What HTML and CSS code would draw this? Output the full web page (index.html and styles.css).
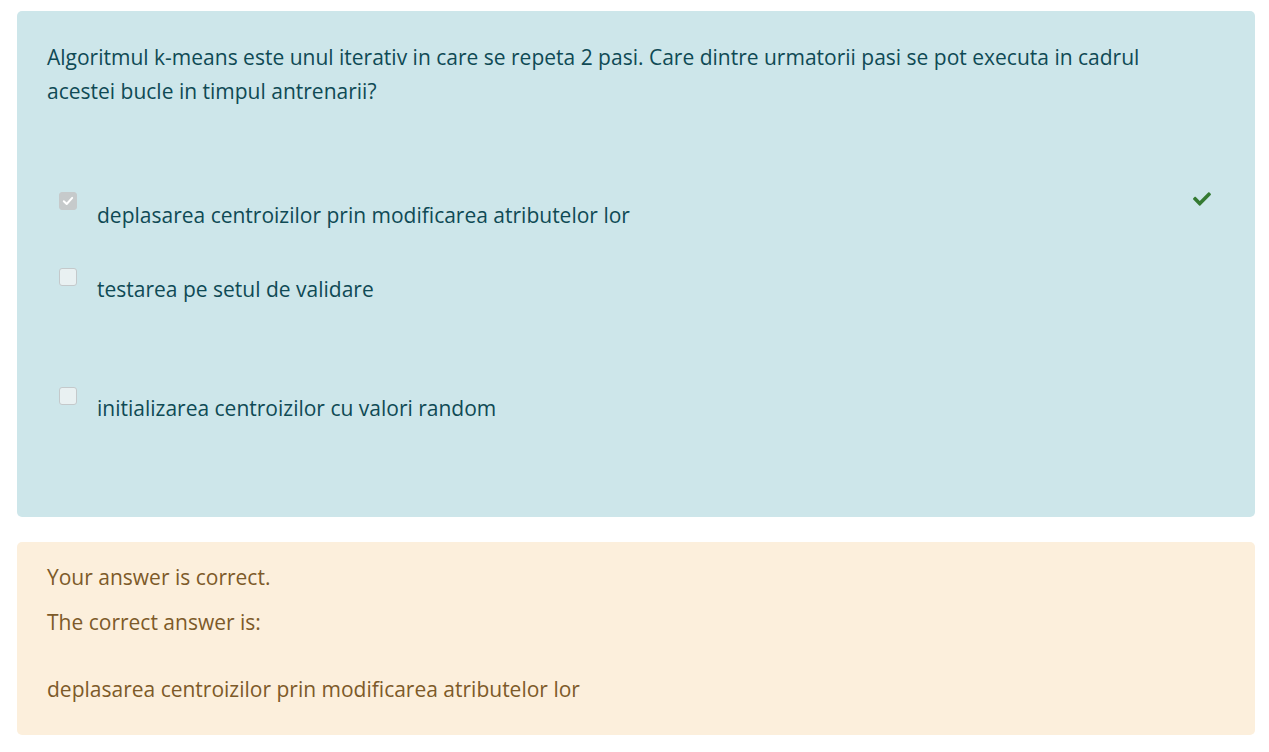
FILE: index.html
```html
<!DOCTYPE html>
<html lang="ro">
<head>
<meta charset="utf-8">
<title>Quiz</title>
<link rel="stylesheet" href="styles.css">
</head>
<body>
<div class="page">
  <div class="formulation">
    <p class="qtext">Algoritmul k-means este unul iterativ in care se repeta 2 pasi. Care dintre urmatorii pasi se pot executa in cadrul acestei bucle in timpul antrenarii?</p>
    <div class="answers">
      <div class="option opt1">
        <span class="box checked"><svg viewBox="0 0 18 18" width="18" height="18"><path d="M4.8 9.2 L7.7 12 L13.2 5.9" fill="none" stroke="#fff" stroke-width="2" stroke-linecap="round" stroke-linejoin="round"/></svg></span>
        <span class="label">deplasarea centroizilor prin modificarea atributelor lor</span>
        <span class="tick"><svg viewBox="0 0 512 512" width="22" height="18"><path fill="#357a32" d="M173.9 439.4l-166.4-166.4c-10-10-10-26.2 0-36.2l36.2-36.2c10-10 26.2-10 36.2 0L192 312.7 432.1 72.6c10-10 26.2-10 36.2 0l36.2 36.2c10 10 10 26.2 0 36.2l-294.4 294.4c-10 10-26.2 10-36.2 0z"/></svg></span>
      </div>
      <div class="option opt2">
        <span class="box"></span>
        <span class="label">testarea pe setul de validare</span>
      </div>
      <div class="option opt3">
        <span class="box"></span>
        <span class="label">initializarea centroizilor cu valori random</span>
      </div>
    </div>
  </div>
  <div class="outcome">
    <p class="fb fb1">Your answer is correct.</p>
    <p class="fb fb2">The correct answer is:</p>
    <p class="fb fb3">deplasarea centroizilor prin modificarea atributelor lor</p>
  </div>
</div>
</body>
</html>
```
FILE: styles.css
```css
html, body {
  margin: 0;
  padding: 0;
  background: #ffffff;
}
body {
  font-family: "Segoe UI", "Open Sans", "Noto Sans", sans-serif;
  font-size: 21px;
}
.page {
  padding: 11px 14px 0 17px;
  display: flex;
  flex-direction: column;
  gap: 25px;
}
.formulation {
  background: #cde6ea;
  color: #0f4a55;
  border-radius: 5px;
  padding: 40px 30px 75px 30px;
  height: 506px;
  box-sizing: border-box;
}
.qtext {
  margin: 0;
  line-height: 34px;
  margin-top: -11px;
  padding-right: 40px;
}
.answers {
  display: flex;
  flex-direction: column;
}
.option {
  display: flex;
  align-items: flex-start;
  padding-left: 12px;
}
.opt1 { margin-top: 84px; }
.opt2 { margin-top: 36px; }
.opt3 { margin-top: 81px; }
.box {
  width: 18px;
  height: 18px;
  box-sizing: border-box;
  border: 1px solid #c4c9cb;
  border-radius: 3px;
  background: #e9f1f2;
  flex: none;
  display: flex;
}
.box.checked {
  background: #c6cacb;
  border-color: #c6cacb;
}
.box svg { display: block; margin: -1px; }
.label {
  margin-left: 20px;
  margin-top: 6px;
  line-height: 34px;
}
.opt2 .label, .opt3 .label { margin-top: 4px; }
.tick {
  margin-left: auto;
  margin-right: 12px;
  margin-top: -2px;
  display: flex;
}
.outcome {
  background: #fcefdc;
  color: #7d5a29;
  border-radius: 5px;
  padding: 20px 30px 29px 30px;
  height: 193px;
  box-sizing: border-box;
}
.fb {
  margin: 0;
  line-height: 30px;
}
.fb2 { margin-top: 15px; }
.fb3 { margin-top: 37px; }
```
